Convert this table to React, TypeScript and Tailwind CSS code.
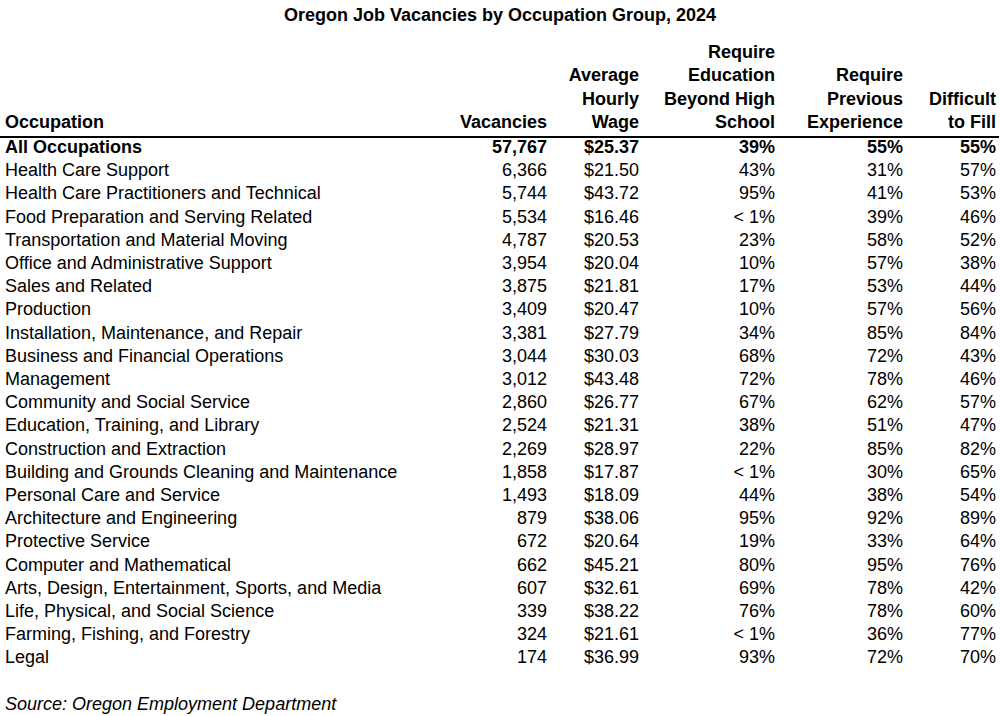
const rows: [string, string, string, string, string, string][] = [
  ["Health Care Support", "6,366", "$21.50", "43%", "31%", "57%"],
  ["Health Care Practitioners and Technical", "5,744", "$43.72", "95%", "41%", "53%"],
  ["Food Preparation and Serving Related", "5,534", "$16.46", "< 1%", "39%", "46%"],
  ["Transportation and Material Moving", "4,787", "$20.53", "23%", "58%", "52%"],
  ["Office and Administrative Support", "3,954", "$20.04", "10%", "57%", "38%"],
  ["Sales and Related", "3,875", "$21.81", "17%", "53%", "44%"],
  ["Production", "3,409", "$20.47", "10%", "57%", "56%"],
  ["Installation, Maintenance, and Repair", "3,381", "$27.79", "34%", "85%", "84%"],
  ["Business and Financial Operations", "3,044", "$30.03", "68%", "72%", "43%"],
  ["Management", "3,012", "$43.48", "72%", "78%", "46%"],
  ["Community and Social Service", "2,860", "$26.77", "67%", "62%", "57%"],
  ["Education, Training, and Library", "2,524", "$21.31", "38%", "51%", "47%"],
  ["Construction and Extraction", "2,269", "$28.97", "22%", "85%", "82%"],
  ["Building and Grounds Cleaning and Maintenance", "1,858", "$17.87", "< 1%", "30%", "65%"],
  ["Personal Care and Service", "1,493", "$18.09", "44%", "38%", "54%"],
  ["Architecture and Engineering", "879", "$38.06", "95%", "92%", "89%"],
  ["Protective Service", "672", "$20.64", "19%", "33%", "64%"],
  ["Computer and Mathematical", "662", "$45.21", "80%", "95%", "76%"],
  ["Arts, Design, Entertainment, Sports, and Media", "607", "$32.61", "69%", "78%", "42%"],
  ["Life, Physical, and Social Science", "339", "$38.22", "76%", "78%", "60%"],
  ["Farming, Fishing, and Forestry", "324", "$21.61", "< 1%", "36%", "77%"],
  ["Legal", "174", "$36.99", "93%", "72%", "70%"],
];

const cols = "grid grid-cols-[447px_95px_92px_136px_128px_93px] px-[5px]";

function Row({ cells, bold }: { cells: string[]; bold?: boolean }) {
  return (
    <div className={`${cols} ${bold ? "font-bold" : ""}`}>
      {cells.map((c, i) => (
        <div key={i} className={`whitespace-nowrap ${i === 0 ? "text-left" : "text-right"}`}>
          {c}
        </div>
      ))}
    </div>
  );
}

export default function App() {
  return (
    <div className="w-[1000px] h-[716px] bg-white text-black text-[18px] leading-[23.2px] font-['Liberation_Sans',Arial,sans-serif] pt-[4px] overflow-hidden">
      <div className="text-center font-bold">Oregon Job Vacancies by Occupation Group, 2024</div>

      <div className={`${cols} mt-[14px] pb-[2px] font-bold items-end border-b-2 border-black mr-[1px]`}>
        <div>Occupation</div>
        <div className="text-right">Vacancies</div>
        <div className="text-right">
          Average
          <br />
          Hourly
          <br />
          Wage
        </div>
        <div className="text-right">
          Require
          <br />
          Education
          <br />
          Beyond High
          <br />
          School
        </div>
        <div className="text-right">
          Require
          <br />
          Previous
          <br />
          Experience
        </div>
        <div className="text-right">
          Difficult
          <br />
          to Fill
        </div>
      </div>

      <div className="-mt-[2px]">
        <Row cells={["All Occupations", "57,767", "$25.37", "39%", "55%", "55%"]} bold />
        {rows.map((r) => (
          <Row key={r[0]} cells={r} />
        ))}

        <div className="h-[23.2px]" />
        <div className="px-[5px] italic">Source: Oregon Employment Department</div>
      </div>
    </div>
  );
}
